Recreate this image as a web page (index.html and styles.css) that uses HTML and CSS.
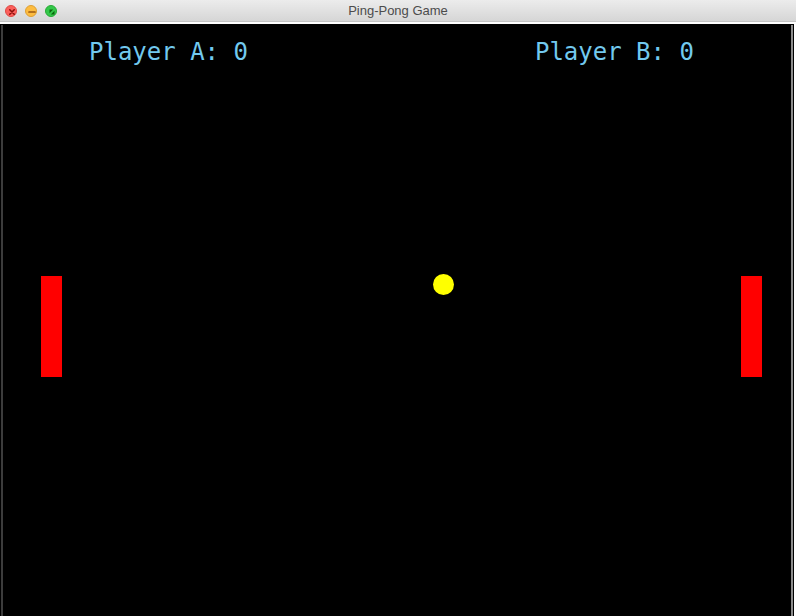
FILE: index.html
```html
<!DOCTYPE html>
<html>
<head>
<meta charset="utf-8">
<title>Ping-Pong Game</title>
<link rel="stylesheet" href="styles.css">
</head>
<body>
<div class="window">
  <div class="titlebar">
    <div class="lights">
      <span class="light close"><svg viewBox="0 0 12 12" width="12" height="12"><path d="M3.8 3.8 L8.2 8.2 M8.2 3.8 L3.8 8.2" stroke="#8c0f0a" stroke-width="1.6" stroke-linecap="round"/></svg></span>
      <span class="light min"><svg viewBox="0 0 12 12" width="12" height="12"><path d="M3 6 H9" stroke="#985712" stroke-width="1.7" stroke-linecap="round"/></svg></span>
      <span class="light max"><svg viewBox="0 0 12 12" width="12" height="12"><path d="M3.5 3.5 H7.2 L3.5 7.2 Z M8.5 8.5 H4.8 L8.5 4.8 Z" fill="#0b650d"/></svg></span>
    </div>
    <div class="title">Ping-Pong Game</div>
  </div>
  <div class="frame">
    <div class="canvas">
      <div class="scores">
        <span class="score">Player A: 0</span>
        <span class="score">Player B: 0</span>
      </div>
      <div class="paddle left"></div>
      <div class="paddle right"></div>
      <div class="ball"></div>
    </div>
  </div>
</div>
</body>
</html>
```
FILE: styles.css
```css
html, body {
  margin: 0;
  padding: 0;
  background: #ffffff;
}
.window {
  width: 796px;
  height: 616px;
  display: flex;
  flex-direction: column;
  overflow: hidden;
}
.titlebar {
  height: 22px;
  flex: 0 0 22px;
  background: linear-gradient(#ececec, #d6d6d6);
  border-bottom: 1px solid #c4c4c4;
  box-sizing: border-box;
  position: relative;
  display: flex;
  align-items: center;
  justify-content: center;
}
.lights {
  position: absolute;
  left: 5px;
  top: 5px;
  display: flex;
  gap: 8px;
}
.light {
  width: 12px;
  height: 12px;
  border-radius: 50%;
  display: block;
  box-sizing: border-box;
}
.light svg { display: block; }
.close { background: #fc605c; border: 0.5px solid #de4a45; }
.min { background: #fdbc40; border: 0.5px solid #dea032; }
.max { background: #34c84a; border: 0.5px solid #27aa35; }
.title {
  font-family: "Liberation Sans", "DejaVu Sans", sans-serif;
  font-size: 13px;
  color: #4c4c4c;
  line-height: 22px;
}
.frame {
  flex: 1;
  margin-top: 2px;
  margin-right: 2px;
  border-top: 1px solid #000;
  border-right: 1px solid #000;
  background: #000;
  display: flex;
}
.canvas {
  flex: 1;
  position: relative;
  background: #000;
  border-left: 2px solid #3c3c3c;
  border-right: 2px solid #8c8c8c;
  margin-left: 1px;
  margin-right: 0;
}
.scores {
  display: flex;
  gap: 287px;
  padding: 13px 0 0 86px;
}
.score {
  font-family: "DejaVu Sans Mono", monospace;
  font-size: 24px;
  line-height: 28px;
  color: #72c9ee;
  white-space: pre;
}
.paddle {
  position: absolute;
  top: 251px;
  width: 21px;
  height: 101px;
  background: #ff0000;
}
.paddle.left { left: 38px; }
.paddle.right { left: 738px; }
.ball {
  position: absolute;
  left: 430px;
  top: 249px;
  width: 21px;
  height: 21px;
  border-radius: 50%;
  background: #ffff00;
}
```
